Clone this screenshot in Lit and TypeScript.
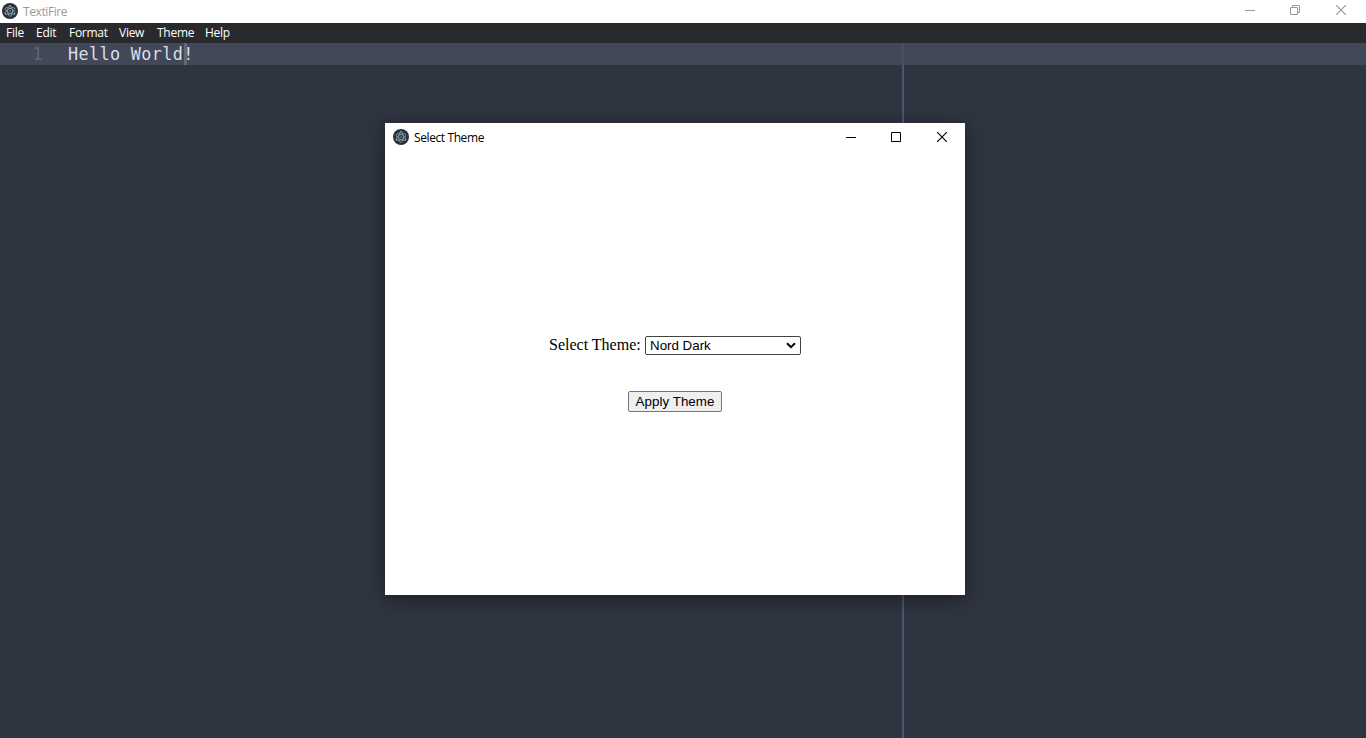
import { LitElement, html, css, svg } from "lit";
import { customElement, property, state } from "lit/decorators.js";

const atomIcon = svg`
  <circle cx="8" cy="8" r="8" fill="#2b2e3b"/>
  <g fill="none" stroke="#a8d4dc" stroke-opacity=".75" stroke-width=".7">
    <ellipse cx="8" cy="8" rx="5.4" ry="2.4" transform="rotate(90 8 8)"/>
    <ellipse cx="8" cy="8" rx="5.4" ry="2.4" transform="rotate(30 8 8)"/>
    <ellipse cx="8" cy="8" rx="5.4" ry="2.4" transform="rotate(150 8 8)"/>
  </g>
  <g fill="#a8d4dc" fill-opacity=".85">
    <circle cx="8" cy="8" r=".7"/><circle cx="3.5" cy="10.7" r=".8"/>
    <circle cx="12.5" cy="10.7" r=".8"/><circle cx="8" cy="2.7" r=".7"/>
  </g>`;

@customElement("window-title")
class WindowTitle extends LitElement {
  @property() label = "";
  @property({ type: Boolean }) restored = false;

  static styles = css`
    :host { display: flex; background: #fff; color: var(--title-color, #000); box-sizing: border-box; }
    .icon { display: block; width: 16px; height: 16px; flex: none; }
    .label { margin: 1px 0 0 5px; font: 12px/16px "Open Sans", "Noto Sans", sans-serif; letter-spacing: -.4px; flex: 1; white-space: nowrap; }
    .controls { display: flex; gap: 36px; }
    .control { width: 10px; height: 10px; margin-top: var(--control-top, 1px); display: block; fill: none; stroke: var(--control-color, #000); }
    .first { margin-right: -1px; }
    .cross { stroke-width: 1.15; }
  `;

  render() {
    return html`
      <svg class="icon" viewBox="0 0 16 16">${atomIcon}</svg>
      <span class="label">${this.label}</span>
      <div class="controls">
        <svg class="control first" viewBox="0 0 10 10"><path d="M0 5.5H10"/></svg>
        <svg class="control" viewBox="0 0 10 10">
          ${this.restored
            ? svg`<path d="M.5 2.5H7.5V9.5H.5ZM2.5 2.5V.5H9.5V7.5H7.5"/>`
            : svg`<path d="M.5 .5H9.5V9.5H.5Z"/>`}
        </svg>
        <svg class="control cross" viewBox="0 0 10 10"><path d="M0 0L10 10M10 0L0 10"/></svg>
      </div>`;
  }
}

@customElement("theme-dialog")
class ThemeDialog extends LitElement {
  @state() theme = "Nord Dark";

  static styles = css`
    :host { display: flex; flex-direction: column; background: #fff; color: #000; box-shadow: 0 4px 16px rgba(0,0,0,.42); }
    .bar { height: 31px; padding: 6px 18px 0 8px; --control-top: 3px; }
    .body { flex: 1; display: flex; flex-direction: column; align-items: center; padding-top: 182px; }
    .row { display: flex; align-items: center; height: 19px; gap: 4px; font: 16px/19px "Liberation Serif", serif; white-space: nowrap; }
    .label { width: 92px; line-height: 18px; height: 19px; letter-spacing: 0; }
    .select { display: flex; align-items: center; justify-content: space-between; box-sizing: border-box; width: 156px; height: 19px; padding: 0 4px; border: 1px solid #444; border-radius: 2px; font: 13.333px/17px "Liberation Sans", Arial, sans-serif; }
    .arrow { width: 10px; height: 7px; fill: none; stroke: #000; stroke-width: 2; }
    .apply { margin: 36px 0 0; box-sizing: border-box; width: 94px; height: 21px; padding: 0; border: 1px solid #767676; border-radius: 2px; background: #efefef; color: #000; font: 13.333px/19px "Liberation Sans", Arial, sans-serif; letter-spacing: .06px; white-space: nowrap; }
  `;

  render() {
    return html`
      <window-title class="bar" label="Select Theme"></window-title>
      <div class="body">
        <div class="row">
          <span class="label">Select Theme:</span>
          <div class="select"><span>${this.theme}</span>
            <svg class="arrow" viewBox="0 0 10 7"><path d="M1 1.2L5 5.2L9 1.2"/></svg>
          </div>
        </div>
        <button class="apply">Apply Theme</button>
      </div>`;
  }
}

@customElement("app-root")
class AppRoot extends LitElement {
  static styles = css`
    :host { display: flex; flex-direction: column; position: relative; width: 1366px; height: 738px; overflow: hidden; background: #2e3440; }
    .bar { height: 23px; padding: 3px 20px 0 2px; --title-color: #999; --control-color: #999; --control-top: 2px; }
    .menu { display: flex; height: 20px; padding-left: 6px; background: #292a2d; color: #fff; font: 12px/20px "Open Sans", "Noto Sans", sans-serif; letter-spacing: -.27px; white-space: nowrap; }
    .file { width: 30px; } .edit { width: 33px; } .format { width: 50px; }
    .view { width: 38px; } .theme { width: 48px; }
    .editor { flex: 1; position: relative; }
    .line { display: flex; height: 22px; background: #434859; color: #d8dee9; font: 16.8px/22px "DejaVu Sans Mono", monospace; letter-spacing: .37px; white-space: pre; }
    .number { width: 43px; margin-right: 25px; text-align: right; color: #56677c; }
    .code { position: relative; }
    .caret { position: absolute; left: 116px; top: 0; width: 3px; height: 22px; background: #616879; }
    .ruler { position: absolute; left: 902px; top: 0; bottom: 0; width: 2px; background: linear-gradient(#465062 22px, #4c566a 22px); }
    .dialog { position: absolute; left: 385px; top: 123px; width: 580px; height: 472px; }
  `;

  render() {
    const menus = ["File", "Edit", "Format", "View", "Theme", "Help"];
    return html`
      <window-title class="bar" label="TextiFire" restored></window-title>
      <nav class="menu">${menus.map((m) => html`<span class=${m.toLowerCase()}>${m}</span>`)}</nav>
      <main class="editor">
        <div class="line"><span class="number">1</span><span class="code">Hello World!<i class="caret"></i></span></div>
        <div class="ruler"></div>
      </main>
      <theme-dialog class="dialog"></theme-dialog>`;
  }
}
